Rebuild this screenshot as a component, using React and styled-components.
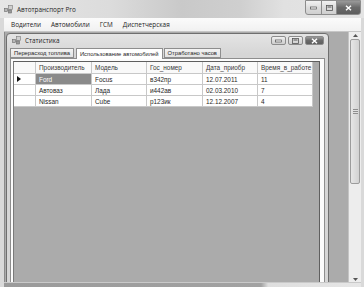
import React from "react";
import styled, { createGlobalStyle } from "styled-components";

const GlobalStyle = createGlobalStyle`
  html, body {
    margin: 0;
    padding: 0;
    background: #ababab;
    overflow: hidden;
  }
`;

const Window = styled.div`
  width: 364px;
  height: 287px;
  display: flex;
  flex-direction: column;
  background: #d9d9d9;
  font-family: "Open Sans", "Noto Sans", sans-serif;
  font-size: 6.4px;
  color: #262626;
  overflow: hidden;
`;

const TitleBar = styled.div`
  height: 18px;
  flex: none;
  display: flex;
  align-items: center;
  padding-left: 4px;
  background: linear-gradient(90deg, #e6e6e6 0%, #dcdcdc 30%, #c9c9c9 50%, #cfcfcf 66%, #e1e1e1 78%, #e4e4e4 100%);
`;

const TitleText = styled.span`
  margin-left: 4px;
  color: #1f1f1f;
`;

const CaptionButtons = styled.div`
  margin-left: auto;
  align-self: flex-start;
  display: flex;
  gap: ${(p) => p.$gap}px;
  margin-right: ${(p) => p.$right}px;
  margin-top: ${(p) => p.$top}px;
`;

const CapButton = styled.div`
  width: ${(p) => p.$w}px;
  height: ${(p) => p.$h}px;
  display: flex;
  align-items: center;
  justify-content: center;
  box-sizing: border-box;
  border: 1px solid #8c8c8c;
  margin-left: ${(p) => (p.$joined ? -1 : 0)}px;
  border-radius: ${(p) => p.$radius};
  background: ${(p) =>
    p.$close
      ? "linear-gradient(#9a9a9a, #6a6a6a 50%, #5e5e5e)"
      : "linear-gradient(#f2f2f2, #dcdcdc 50%, #cfcfcf)"};
`;

const Frame = styled.div`
  flex: 1;
  display: flex;
  flex-direction: column;
  padding: 0 3px 0 4px;
  min-height: 0;
`;

const MenuBar = styled.div`
  height: 14px;
  flex: none;
  display: flex;
  align-items: center;
  padding-left: 2px;
  background: linear-gradient(#fbfbfb, #f1f1f1);
  border-bottom: 1px solid #c6c6c6;
  box-sizing: border-box;
`;

const MenuItem = styled.span`
  padding: 0 5px;
  color: #222;
`;

const Client = styled.div`
  flex: 1;
  display: flex;
  min-height: 0;
  background: #ababab;
  border-left: 1px solid #8a8a8a;
  overflow: hidden;
`;

const MdiArea = styled.div`
  flex: 1;
  padding: 1px 0 0 1px;
  overflow: hidden;
`;

const ChildWindow = styled.div`
  width: 323px;
  height: 262px;
  box-sizing: border-box;
  display: flex;
  flex-direction: column;
  padding: 0 3px;
  border: 1px solid #6f6f6f;
  border-radius: 4px 4px 0 0;
  background: linear-gradient(#e4e4e4, #d6d6d6 20px, #d6d6d6);
`;

const ChildTitle = styled.div`
  height: 13px;
  flex: none;
  display: flex;
  align-items: center;
  padding-left: 2px;
`;

const Tabs = styled.div`
  height: 11px;
  flex: none;
  display: flex;
  align-items: flex-end;
  font-family: "Liberation Sans", "Open Sans", sans-serif;
  font-size: 5.8px;
`;

const Tab = styled.div`
  height: ${(p) => (p.$active ? 11 : 10)}px;
  box-sizing: border-box;
  display: flex;
  align-items: center;
  padding: 0 3px;
  margin-right: ${(p) => (p.$active ? 1 : 2)}px;
  margin-bottom: ${(p) => (p.$active ? -1 : 0)}px;
  border: 1px solid #8e8e8e;
  border-bottom: ${(p) => (p.$active ? "none" : "1px solid #8e8e8e")};
  background: ${(p) => (p.$active ? "#ffffff" : "linear-gradient(#f4f4f4, #e2e2e2)")};
  position: relative;
  z-index: ${(p) => (p.$active ? 1 : 0)};
  white-space: nowrap;
`;

const TabPage = styled.div`
  flex: 1;
  display: flex;
  min-height: 0;
  padding: 2px 4px 0 2px;
  background: #fcfcfc;
  border: 1px solid #8e8e8e;
`;

const Grid = styled.div`
  flex: 1;
  background: #ababab;
  border: 1px solid #5f5f5f;
  border-left-color: #7a7a7a;
  font-family: "Liberation Sans", "Open Sans", sans-serif;
  font-size: 6.4px;
`;

const GridRow = styled.div`
  display: grid;
  grid-template-columns: 22px 56px 55px 56px 55px 55px;
  height: ${(p) => (p.$header ? 12 : 11)}px;
`;

const Cell = styled.div`
  box-sizing: border-box;
  display: flex;
  align-items: center;
  padding-left: 3px;
  border-right: 1px solid #c8c8c8;
  border-bottom: 1px solid #c8c8c8;
  white-space: nowrap;
  overflow: hidden;
  background: ${(p) => (p.$selected ? "#8a8a8a" : p.$header ? "#f9f9f9" : "#ffffff")};
  color: ${(p) => (p.$selected ? "#ffffff" : p.$header ? "#3a3a3a" : "#262626")};
`;

const VScroll = styled.div`
  width: 12px;
  flex: none;
  display: flex;
  flex-direction: column;
  background: #ededed;
  border-left: 1px solid #c4c4c4;
`;

const ScrollArrow = styled.div`
  height: 6px;
  flex: none;
  display: flex;
  align-items: center;
  justify-content: center;
`;

const Thumb = styled.div`
  height: 145px;
  flex: none;
  margin: 1px 1px 0;
  display: flex;
  align-items: center;
  justify-content: center;
  box-sizing: border-box;
  border: 1px solid #9c9c9c;
  border-radius: 2px;
  background: linear-gradient(90deg, #e6e6e6, #d2d2d2);
`;

const Track = styled.div`
  flex: 1;
`;

const Grip = styled.div`
  width: 5px;
  height: 5px;
  background: repeating-linear-gradient(#8e8e8e 0 1px, #e0e0e0 1px 2px);
`;

const BottomBar = styled.div`
  height: 4px;
  flex: none;
  background: linear-gradient(90deg, #9a9a9a 0%, #a2a2a2 72%, #dedede 74%, #e6e6e6 100%);
  border-top: 1px solid #c9c9c9;
`;

const AppIcon = () => (
  <svg width="9" height="9" viewBox="0 0 9 9">
    <rect x="0.5" y="3.5" width="3" height="3" fill="#b8b8b8" stroke="#6a6a6a" strokeWidth="0.6" />
    <rect x="4.5" y="0.5" width="4" height="4" fill="#cfcfcf" stroke="#7a7a7a" strokeWidth="0.6" />
    <rect x="4.5" y="5" width="3" height="3" fill="#9a9a9a" stroke="#6a6a6a" strokeWidth="0.6" />
  </svg>
);

const MinGlyph = () => (
  <svg width="7" height="4" viewBox="0 0 7 4">
    <rect x="0.5" y="1" width="6" height="2" fill="#f4f4f4" stroke="#555" strokeWidth="0.7" />
  </svg>
);

const MaxGlyph = () => (
  <svg width="7" height="6" viewBox="0 0 7 6">
    <rect x="0.5" y="0.5" width="6" height="5" fill="none" stroke="#555" strokeWidth="0.8" />
    <rect x="1.5" y="1.5" width="4" height="1" fill="#555" />
  </svg>
);

const CloseGlyph = () => (
  <svg width="7" height="6" viewBox="0 0 7 6">
    <path d="M1 0.8 L6 5.2 M6 0.8 L1 5.2" stroke="#ffffff" strokeWidth="1.5" />
  </svg>
);

const RowArrow = () => (
  <svg width="4" height="6" viewBox="0 0 4 6">
    <path d="M0 0 L4 3 L0 6 Z" fill="#111" />
  </svg>
);

const columns = ["Производитель", "Модель", "Гос_номер", "Дата_приобр", "Время_в_работе"];

const rows = [
  ["Ford", "Focus", "в342пр", "12.07.2011", "11"],
  ["Автоваз", "Лада", "и442ав", "02.03.2010", "7"],
  ["Nissan", "Cube", "р123ик", "12.12.2007", "4"],
];

function MainCaption() {
  return (
    <CaptionButtons $gap={0} $right={3} $top={0}>
      <CapButton $w={17} $h={15} $radius="0 0 0 3px">
        <MinGlyph />
      </CapButton>
      <CapButton $w={16} $h={15} $radius="0" $joined>
        <MaxGlyph />
      </CapButton>
      <CapButton $w={25} $h={15} $radius="0 0 3px 0" $close $joined>
        <CloseGlyph />
      </CapButton>
    </CaptionButtons>
  );
}

function ChildCaption() {
  return (
    <CaptionButtons $gap={2} $right={1} $top={2}>
      <CapButton $w={15} $h={9} $radius="2px">
        <MinGlyph />
      </CapButton>
      <CapButton $w={15} $h={9} $radius="2px">
        <MaxGlyph />
      </CapButton>
      <CapButton $w={19} $h={9} $radius="2px" $close>
        <CloseGlyph />
      </CapButton>
    </CaptionButtons>
  );
}

export default function App() {
  return (
    <>
      <GlobalStyle />
      <Window>
        <TitleBar>
          <AppIcon />
          <TitleText>Автотранспорт Pro</TitleText>
          <MainCaption />
        </TitleBar>
        <Frame>
          <MenuBar>
            <MenuItem>Водители</MenuItem>
            <MenuItem>Автомобили</MenuItem>
            <MenuItem>ГСМ</MenuItem>
            <MenuItem>Диспетчерская</MenuItem>
          </MenuBar>
          <Client>
            <MdiArea>
              <ChildWindow>
                <ChildTitle>
                  <AppIcon />
                  <TitleText>Статистика</TitleText>
                  <ChildCaption />
                </ChildTitle>
                <Tabs>
                  <Tab>Перерасход топлива</Tab>
                  <Tab $active>Использование автомобилей</Tab>
                  <Tab>Отработано часов</Tab>
                </Tabs>
                <TabPage>
                  <Grid>
                    <GridRow $header>
                      <Cell $header />
                      {columns.map((c) => (
                        <Cell $header key={c}>
                          {c}
                        </Cell>
                      ))}
                    </GridRow>
                    {rows.map((r, i) => (
                      <GridRow key={r[0]}>
                        <Cell>{i === 0 && <RowArrow />}</Cell>
                        {r.map((v, j) => (
                          <Cell key={j} $selected={i === 0 && j === 0}>
                            {v}
                          </Cell>
                        ))}
                      </GridRow>
                    ))}
                  </Grid>
                </TabPage>
              </ChildWindow>
            </MdiArea>
            <VScroll>
              <ScrollArrow>
                <svg width="5" height="3" viewBox="0 0 5 3">
                  <path d="M0 3 L2.5 0 L5 3 Z" fill="#555" />
                </svg>
              </ScrollArrow>
              <Thumb>
                <Grip />
              </Thumb>
              <Track />
              <ScrollArrow>
                <svg width="5" height="3" viewBox="0 0 5 3">
                  <path d="M0 0 L2.5 3 L5 0 Z" fill="#555" />
                </svg>
              </ScrollArrow>
            </VScroll>
          </Client>
          <BottomBar />
        </Frame>
      </Window>
    </>
  );
}
